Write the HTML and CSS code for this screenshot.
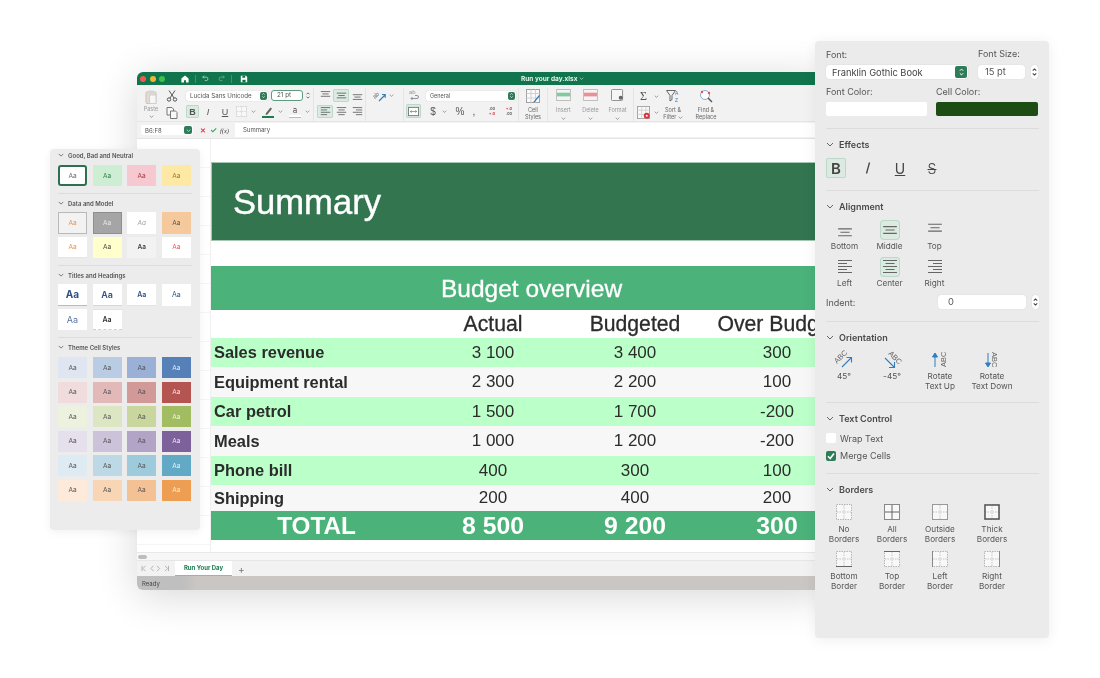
FILE: index.html
```html
<!DOCTYPE html>
<html lang="en">
  <head>
    <meta charset="UTF-8" />
    <meta name="viewport" content="width=device-width, initial-scale=1.0" />
    <title>Run your day.xlsx</title>
    <link rel="stylesheet" href="styles.css">
  </head>
  <body>
    <svg class="defs" aria-hidden="true">
      <symbol id="chev" viewBox="0 0 8 5"><path d="M1 1l3 3 3-3" fill="none" stroke="currentColor" stroke-width="1"/></symbol>
      <symbol id="up-down" viewBox="0 0 8 12"><path d="M2 4.500l2-2 2 2M2 7.500l2 2 2-2" fill="none" stroke="currentColor" stroke-width="1.200"/></symbol>
      <symbol id="a-top" viewBox="0 0 14 14"><path d="M1 2h12M3 5h8M1 8h12" stroke="currentColor" fill="none"/></symbol>
      <symbol id="a-mid" viewBox="0 0 14 14"><path d="M1 4h12M3 7h8M1 10h12" stroke="currentColor" fill="none"/></symbol>
      <symbol id="a-bot" viewBox="0 0 14 14"><path d="M1 6h12M3 9h8M1 12h12" stroke="currentColor" fill="none"/></symbol>
      <symbol id="a-left" viewBox="0 0 14 14"><path d="M1 2h12M1 5h8M1 8h12M1 11h8" stroke="currentColor" fill="none"/></symbol>
      <symbol id="a-center" viewBox="0 0 14 14"><path d="M1 2h12M3 5h8M1 8h12M3 11h8" stroke="currentColor" fill="none"/></symbol>
      <symbol id="a-right" viewBox="0 0 14 14"><path d="M1 2h12M5 5h8M1 8h12M5 11h8" stroke="currentColor" fill="none"/></symbol>
      <symbol id="a-left5" viewBox="0 0 16 16"><path d="M1 1.500h14M1 4.500h9M1 7.500h14M1 10.500h9M1 13.500h14" stroke="currentColor" fill="none"/></symbol>
      <symbol id="a-center5" viewBox="0 0 16 16"><path d="M1 1.500h14M3.500 4.500h9M1 7.500h14M3.500 10.500h9M1 13.500h14" stroke="currentColor" fill="none"/></symbol>
      <symbol id="a-right5" viewBox="0 0 16 16"><path d="M1 1.500h14M6 4.500h9M1 7.500h14M6 10.500h9M1 13.500h14" stroke="currentColor" fill="none"/></symbol>
      <symbol id="grid-dash" viewBox="0 0 16 16"><rect x=".5" y=".5" width="15" height="15" fill="#f8f8f8" stroke="#b5b5b5" stroke-dasharray="1.500 1"/><path d="M8 1v14M1 8h14" stroke="#c6c6c6" stroke-dasharray="1.500 1"/></symbol>
      <symbol id="sheet-ic" viewBox="0 0 14 14"><rect x=".5" y=".5" width="13" height="13" fill="#fafafa" stroke="#a0a0a0"/><path d="M.5 4.500h13M.5 9h13M5 .5v13M9.500 .5v13" stroke="#d0d0d0" fill="none"/></symbol>
    </svg>

    <div class="stage">
      <!-- main window -->
      <section class="window">
        <header class="titlebar">
          <span class="lights"><i class="red"></i><i class="yellow"></i><i class="green"></i></span>
          <svg class="tb-home" viewBox="0 0 10 10"><path d="M5 .5L.5 4.500V9.500h3.200V6.500h2.600v3h3.200V4.500z" fill="#fff"/></svg>
          <span class="tb-sep"></span>
          <svg class="tb-undo" viewBox="0 0 10 10"><path d="M3 1L1 3l2 2M1 3h5a2.500 2.500 0 010 5H4" fill="none" stroke="#cfe3d9"/></svg>
          <svg class="tb-redo" viewBox="0 0 10 10"><path d="M7 1l2 2-2 2M9 3H4a2.500 2.500 0 000 5h2" fill="none" stroke="#7fb49b"/></svg>
          <span class="tb-sep"></span>
          <svg class="tb-save" viewBox="0 0 10 10"><path d="M1 1h6.500L9 2.500V9H1z" fill="#fff"/><rect x="3" y="1" width="3.500" height="2.500" fill="#10754c"/><rect x="3" y="6" width="4" height="3" fill="#10754c"/></svg>
          <span class="doc-name">Run your day.xlsx <svg viewBox="0 0 8 5"><use href="#chev"/></svg></span>
        </header>

        <div class="ribbon">
          <div class="rb-group g-font">
            <div class="paste">
              <svg class="ic12" viewBox="0 0 12 14"><rect x="1" y="2" width="10" height="11.500" rx="1" fill="#e2dcd2" stroke="#c9c3b8"/><rect x="3.500" y=".5" width="5" height="3" fill="#d6d6d6"/><rect x="4.500" y="5" width="6.500" height="8.500" fill="#f6f6f6" stroke="#cfcfcf"/></svg>
              <span class="rb-label dim">Paste</span>
              <svg class="chev dim" viewBox="0 0 8 5"><use href="#chev"/></svg>
            </div>
            <div class="cut-copy">
              <svg class="ic12" viewBox="0 0 12 12"><path d="M3 .5l5 7.500M9 .5L4 8" stroke="#555" fill="none"/><circle cx="3" cy="9.500" r="1.700" fill="none" stroke="#555"/><circle cx="9" cy="9.500" r="1.700" fill="none" stroke="#555"/></svg>
              <svg class="ic12" viewBox="0 0 12 12"><path d="M1 .5h5l1.500 1.500V8H1z" fill="#f8f8f8" stroke="#777"/><path d="M4.500 4h5L11 5.500v6H4.500z" fill="#f8f8f8" stroke="#777"/></svg>
            </div>
            <div class="rb-rows">
              <div class="rb-row">
                <div class="select sel-font"><span>Lucida Sans Unicode</span><b class="stepper"><svg viewBox="0 0 8 12"><use href="#up-down"/></svg></b></div>
                <div class="size-box">21 pt</div>
                <svg class="mini-step" viewBox="0 0 8 12"><use href="#up-down"/></svg>
              </div>
              <div class="rb-row">
                <span class="cell w13 on fmt-b">B</span>
                <span class="cell w18 fmt-i">I</span>
                <span class="cell w16 fmt-u">U</span>
                <span class="cell w16"><svg class="ic11" viewBox="0 0 16 16"><use href="#grid-dash"/></svg></span>
                <span class="cell w8"><svg class="chev" viewBox="0 0 8 5"><use href="#chev"/></svg></span>
                <span class="cell w16 ml3"><svg class="ic12" viewBox="0 0 12 12"><path d="M4 7l4.500-5.500 1.500 1.200L5.500 8.500 3.500 9z" fill="#666"/><rect y="10" width="12" height="2" fill="#1f7a4d"/></svg></span>
                <span class="cell w8"><svg class="chev" viewBox="0 0 8 5"><use href="#chev"/></svg></span>
                <span class="cell w16 ml3"><span class="color-a">a</span></span>
                <span class="cell w8"><svg class="chev" viewBox="0 0 8 5"><use href="#chev"/></svg></span>
              </div>
            </div>
          </div>

          <div class="rb-group g-align">
            <span class="cell"><svg class="ic11" viewBox="0 0 14 14"><use href="#a-top"/></svg></span>
            <span class="cell on"><svg class="ic11" viewBox="0 0 14 14"><use href="#a-mid"/></svg></span>
            <span class="cell"><svg class="ic11" viewBox="0 0 14 14"><use href="#a-bot"/></svg></span>
            <span class="cell on"><svg class="ic11" viewBox="0 0 14 14"><use href="#a-left"/></svg></span>
            <span class="cell"><svg class="ic11" viewBox="0 0 14 14"><use href="#a-center"/></svg></span>
            <span class="cell"><svg class="ic11" viewBox="0 0 14 14"><use href="#a-right"/></svg></span>
          </div>

          <div class="rb-group g-orient">
            <svg class="ic12 open" viewBox="0 0 12 12"><text class="svg-abc" transform="translate(1 9) rotate(-45)">ab</text><path d="M5 11l6-6M8 4.500h3.200v3.200" stroke="#2f7fc1" fill="none" stroke-width="1.200"/></svg>
            <svg class="chev" viewBox="0 0 8 5"><use href="#chev"/></svg>
          </div>

          <div class="rb-group g-number">
            <div class="wrap-col">
              <svg class="ic12" viewBox="0 0 12 12"><text class="svg-ab" x="1" y="5">ab</text><path d="M3 9.500h6a1.500 1.500 0 000-3H7M4.500 8L3 9.500 4.500 11" stroke="#778" fill="none" stroke-width=".8"/></svg>
              <span class="cell on merge-btn"><svg class="ic11" viewBox="0 0 12 12"><rect x=".5" y="1.500" width="11" height="9" fill="#fff" stroke="#777"/><path d="M2.500 6h7M2.500 6l1.500-1.200M2.500 6l1.500 1.200M9.500 6L8 4.800M9.500 6L8 7.200" stroke="#35a36b" fill="none" stroke-width=".8"/></svg></span>
            </div>
            <div class="rb-rows">
              <div class="rb-row"><div class="select sel-num"><span>General</span><b class="stepper"><svg viewBox="0 0 8 12"><use href="#up-down"/></svg></b></div></div>
              <div class="rb-row">
                <span class="cell w14 sym">$</span>
                <span class="cell w8"><svg class="chev" viewBox="0 0 8 5"><use href="#chev"/></svg></span>
                <span class="cell w24 sym">%</span>
                <span class="cell w4 sym">,</span>
                <span class="cell w16 ml8 dec"><span>.00</span><span class="red-t">+.0</span></span>
                <span class="cell w16 ml1 dec"><span class="red-t">+.0</span><span>.00</span></span>
              </div>
            </div>
          </div>

          <div class="rb-group g-styles rb-col">
            <svg class="ic14" viewBox="0 0 14 14"><use href="#sheet-ic"/><path d="M13 6L8 12l-1 1.500 1.800-.6L14 7z" fill="#2f7fc1"/></svg>
            <span class="rb-label">Cell<br>Styles</span>
          </div>

          <div class="rb-group g-cells">
            <div class="rb-col">
              <svg class="ic-wide" viewBox="0 0 16 13"><rect x=".5" y=".5" width="15" height="12" fill="#f4f4f4" stroke="#bbb"/><rect x="1" y="4" width="14" height="4" fill="#7fcb9e"/></svg>
              <span class="rb-label dim">Insert</span>
              <svg class="chev" viewBox="0 0 8 5"><use href="#chev"/></svg>
            </div>
            <div class="rb-col">
              <svg class="ic-wide" viewBox="0 0 16 13"><rect x=".5" y=".5" width="15" height="12" fill="#f4f4f4" stroke="#bbb"/><rect x="1" y="4" width="14" height="4" fill="#ea8f96"/></svg>
              <span class="rb-label dim">Delete</span>
              <svg class="chev" viewBox="0 0 8 5"><use href="#chev"/></svg>
            </div>
            <div class="rb-col">
              <svg class="ic-wide" viewBox="0 0 14 13"><rect x=".5" y=".5" width="12" height="12" rx="1" fill="#f6f6f6" stroke="#888"/><circle cx="10.500" cy="9.500" r="2.200" fill="#666"/></svg>
              <span class="rb-label dim">Format</span>
              <svg class="chev" viewBox="0 0 8 5"><use href="#chev"/></svg>
            </div>
          </div>

          <div class="rb-group g-edit">
            <div class="edit-col">
              <span class="edit-row"><span class="sigma">Σ</span><svg class="chev" viewBox="0 0 8 5"><use href="#chev"/></svg></span>
              <span class="edit-row"><svg class="ic13" viewBox="0 0 14 14"><use href="#sheet-ic"/><circle cx="10.500" cy="10.500" r="3.200" fill="#d8343f"/><circle cx="10.500" cy="10.500" r="1.100" fill="#fff"/></svg><svg class="chev" viewBox="0 0 8 5"><use href="#chev"/></svg></span>
            </div>
            <div class="rb-col col-sort">
              <svg class="ic14" viewBox="0 0 14 14"><path d="M.5 1.500h9l-3.500 5v4l-2 1.500V6.500z" fill="#f4f4f4" stroke="#666"/><text class="svg-az" x="9" y="6">A</text><text class="svg-az" x="9" y="13">Z</text></svg>
              <span class="rb-label">Sort &amp;<br>Filter <svg class="chev" viewBox="0 0 8 5"><use href="#chev"/></svg></span>
            </div>
            <div class="rb-col col-find">
              <svg class="ic14" viewBox="0 0 14 14"><circle cx="6" cy="6" r="4.500" fill="#fff" stroke="#7fb0d8"/><path d="M9 9l4 4" stroke="#555" stroke-width="1.500"/><circle cx="3" cy="3" r="1.200" fill="#e0525c"/><circle cx="10" cy="4" r="1.200" fill="#e0525c"/></svg>
              <span class="rb-label">Find &amp;<br>Replace</span>
            </div>
          </div>
        </div>

        <div class="formula-bar">
          <div class="name-box"><span>B6:F8</span><b class="stepper"><svg viewBox="0 0 8 5"><use href="#chev"/></svg></b></div>
          <span class="fx-x">✕</span>
          <span class="fx-ok">✓</span>
          <span class="fx-f">f(x)</span>
          <div class="fx-input">Summary</div>
        </div>

        <div class="sheet">
          <div class="gutter"></div>
          <div class="cells">
            <div class="title-cell">Summary</div>
            <div class="band">Budget overview</div>
            <div class="row head"><span></span><span>Actual</span><span>Budgeted</span><span>Over Budget</span></div>
            <div class="row green r29"><b>Sales revenue</b><span>3 100</span><span>3 400</span><span>300</span></div>
            <div class="row plain r30"><b>Equipment rental</b><span>2 300</span><span>2 200</span><span>100</span></div>
            <div class="row green r29"><b>Car petrol</b><span>1 500</span><span>1 700</span><span>-200</span></div>
            <div class="row plain r30"><b>Meals</b><span>1 000</span><span>1 200</span><span>-200</span></div>
            <div class="row green r29"><b>Phone bill</b><span>400</span><span>300</span><span>100</span></div>
            <div class="row plain r26"><b>Shipping</b><span>200</span><span>400</span><span>200</span></div>
            <div class="row total"><b>TOTAL</b><b>8 500</b><b>9 200</b><b>300</b></div>
          </div>
        </div>

        <div class="scroll-strip"><span class="thumb"></span></div>
        <div class="tabs">
          <span class="tab-nav">
            <svg viewBox="0 0 6 8"><path d="M1 1v6M5 1L2 4l3 3" fill="none" stroke="#aaa"/></svg>
            <svg viewBox="0 0 6 8"><path d="M5 1L2 4l3 3" fill="none" stroke="#aaa"/></svg>
            <svg viewBox="0 0 6 8"><path d="M1 1l3 3-3 3" fill="none" stroke="#aaa"/></svg>
            <svg viewBox="0 0 6 8"><path d="M5 1v6M1 1l3 3-3 3" fill="none" stroke="#aaa"/></svg>
          </span>
          <span class="tab">Run Your Day</span>
          <span class="tab-add">+</span>
        </div>
        <footer class="status"><span>Ready</span></footer>
      </section>

      <!-- cell styles palette -->
      <aside class="styles-panel">
        <section class="st-section">
          <h4><svg viewBox="0 0 8 5"><use href="#chev"/></svg>Good, Bad and Neutral</h4>
          <div class="st-grid">
            <span class="sw sel">Aa</span><span class="sw good">Aa</span><span class="sw bad">Aa</span><span class="sw neutral">Aa</span>
          </div>
        </section>
        <section class="st-section">
          <h4><svg viewBox="0 0 8 5"><use href="#chev"/></svg>Data and Model</h4>
          <div class="st-grid tall">
            <span class="sw calc">Aa</span><span class="sw check">Aa</span><span class="sw expl">Aa</span><span class="sw input">Aa</span>
            <span class="sw linked">Aa</span><span class="sw note">Aa</span><span class="sw output">Aa</span><span class="sw warn">Aa</span>
          </div>
        </section>
        <section class="st-section">
          <h4><svg viewBox="0 0 8 5"><use href="#chev"/></svg>Titles and Headings</h4>
          <div class="st-grid tall">
            <span class="sw h1">Aa</span><span class="sw h2">Aa</span><span class="sw h3">Aa</span><span class="sw h4x">Aa</span>
            <span class="sw ttl">Aa</span><span class="sw tot">Aa</span>
          </div>
        </section>
        <section class="st-section last">
          <h4><svg viewBox="0 0 8 5"><use href="#chev"/></svg>Theme Cell Styles</h4>
          <div class="st-grid theme">
            <span class="sw b1">Aa</span><span class="sw b2">Aa</span><span class="sw b3">Aa</span><span class="sw b4">Aa</span>
            <span class="sw r1">Aa</span><span class="sw r2">Aa</span><span class="sw r3">Aa</span><span class="sw r4">Aa</span>
            <span class="sw g1">Aa</span><span class="sw g2">Aa</span><span class="sw g3">Aa</span><span class="sw g4">Aa</span>
            <span class="sw p1">Aa</span><span class="sw p2">Aa</span><span class="sw p3">Aa</span><span class="sw p4">Aa</span>
            <span class="sw c1">Aa</span><span class="sw c2">Aa</span><span class="sw c3">Aa</span><span class="sw c4">Aa</span>
            <span class="sw o1">Aa</span><span class="sw o2">Aa</span><span class="sw o3">Aa</span><span class="sw o4">Aa</span>
          </div>
        </section>
      </aside>

      <!-- format inspector -->
      <aside class="format-panel">
        <section class="fp-section fp-top">
          <div class="fp-fields">
            <div class="fp-field">
              <label>Font:</label>
              <div class="select sel-panel"><span>Franklin Gothic Book</span><b class="stepper"><svg viewBox="0 0 8 12"><use href="#up-down"/></svg></b></div>
            </div>
            <div class="fp-field f-size">
              <label>Font Size:</label>
              <div class="fp-step"><div class="fp-input w47">15 pt</div><span class="step-pill"><svg viewBox="0 0 8 12"><use href="#up-down"/></svg></span></div>
            </div>
          </div>
          <div class="fp-colors">
            <div class="fp-field"><label>Font Color:</label><div class="color-well"></div></div>
            <div class="fp-field"><label>Cell Color:</label><div class="color-well dark"></div></div>
          </div>
        </section>

        <section class="fp-section">
          <h3><svg viewBox="0 0 8 5"><use href="#chev"/></svg>Effects</h3>
          <div class="effects">
            <span class="fx-btn on f-b">B</span>
            <span class="fx-btn f-i"><svg viewBox="0 0 12 14"><path d="M7.500 1.500L4.500 12.500" stroke="#444" stroke-width="1.300" fill="none"/></svg></span>
            <span class="fx-btn f-u">U</span>
            <span class="fx-btn f-s">S</span>
          </div>
        </section>

        <section class="fp-section">
          <h3><svg viewBox="0 0 8 5"><use href="#chev"/></svg>Alignment</h3>
          <div class="align-grid">
            <div class="tool"><span class="tool-ic"><svg viewBox="0 0 14 14"><use href="#a-bot"/></svg></span>Bottom</div>
            <div class="tool"><span class="tool-ic on"><svg viewBox="0 0 14 14"><use href="#a-mid"/></svg></span>Middle</div>
            <div class="tool"><span class="tool-ic"><svg viewBox="0 0 14 14"><use href="#a-top"/></svg></span>Top</div>
            <div class="tool"><span class="tool-ic"><svg viewBox="0 0 16 16"><use href="#a-left5"/></svg></span>Left</div>
            <div class="tool"><span class="tool-ic on"><svg viewBox="0 0 16 16"><use href="#a-center5"/></svg></span>Center</div>
            <div class="tool"><span class="tool-ic"><svg viewBox="0 0 16 16"><use href="#a-right5"/></svg></span>Right</div>
          </div>
          <div class="indent">
            <label>Indent:</label>
            <div class="fp-step"><div class="fp-input w88">0</div><span class="step-pill"><svg viewBox="0 0 8 12"><use href="#up-down"/></svg></span></div>
          </div>
        </section>

        <section class="fp-section">
          <h3><svg viewBox="0 0 8 5"><use href="#chev"/></svg>Orientation</h3>
          <div class="four-grid orient">
            <div class="tool">
              <svg class="orient-ic" viewBox="0 0 22 20"><text class="svg-rot" transform="translate(4 15) rotate(-45)">ABC</text><path d="M9 18l9-9M13.500 8.500H18.500V13.500" fill="none" stroke="#2f7fc1" stroke-width="1.100"/></svg>
              45°
            </div>
            <div class="tool">
              <svg class="orient-ic" viewBox="0 0 22 20"><text class="svg-rot" transform="translate(7 5) rotate(45)">ABC</text><path d="M4 9l9 9M8 18.500h5.500V13" fill="none" stroke="#2f7fc1" stroke-width="1.100"/></svg>
              -45°
            </div>
            <div class="tool">
              <svg class="orient-ic" viewBox="0 0 22 20"><text class="svg-rot" transform="translate(17 18) rotate(-90)">ABC</text><path d="M6 18V6M3.500 8L6 4l2.500 4z" fill="#2f7fc1" stroke="#2f7fc1"/></svg>
              Rotate<br>Text Up
            </div>
            <div class="tool">
              <svg class="orient-ic" viewBox="0 0 22 20"><text class="svg-rot" transform="translate(11 3) rotate(90)">ABC</text><path d="M7 4v12M4.500 14L7 18l2.500-4z" fill="#2f7fc1" stroke="#2f7fc1"/></svg>
              Rotate<br>Text Down
            </div>
          </div>
        </section>

        <section class="fp-section">
          <h3><svg viewBox="0 0 8 5"><use href="#chev"/></svg>Text Control</h3>
          <div class="checks">
            <div class="check-row"><span class="box"></span>Wrap Text</div>
            <div class="check-row"><span class="box ticked"><svg viewBox="0 0 10 10"><path d="M2 5.200l2.200 2.300L8 2.500" fill="none" stroke="#fff" stroke-width="1.600"/></svg></span>Merge Cells</div>
          </div>
        </section>

        <section class="fp-section last">
          <h3><svg viewBox="0 0 8 5"><use href="#chev"/></svg>Borders</h3>
          <div class="four-grid borders">
            <div class="tool"><svg class="b-ic" viewBox="0 0 16 16"><use href="#grid-dash"/></svg>No<br>Borders</div>
            <div class="tool"><svg class="b-ic" viewBox="0 0 16 16"><rect x=".5" y=".5" width="15" height="15" fill="#f8f8f8" stroke="#888"/><path d="M8 1v14M1 8h14" stroke="#666"/></svg>All<br>Borders</div>
            <div class="tool"><svg class="b-ic" viewBox="0 0 16 16"><use href="#grid-dash"/><rect x=".5" y=".5" width="15" height="15" fill="none" stroke="#999"/></svg>Outside<br>Borders</div>
            <div class="tool"><svg class="b-ic" viewBox="0 0 16 16"><use href="#grid-dash"/><rect x="1" y="1" width="14" height="14" fill="none" stroke="#555" stroke-width="1.500"/></svg>Thick<br>Borders</div>
            <div class="tool"><svg class="b-ic" viewBox="0 0 16 16"><use href="#grid-dash"/><path d="M0 15.500h16" stroke="#666"/></svg>Bottom<br>Border</div>
            <div class="tool"><svg class="b-ic" viewBox="0 0 16 16"><use href="#grid-dash"/><path d="M0 .5h16" stroke="#666"/></svg>Top<br>Border</div>
            <div class="tool"><svg class="b-ic" viewBox="0 0 16 16"><use href="#grid-dash"/><path d="M.5 0v16" stroke="#888"/></svg>Left<br>Border</div>
            <div class="tool"><svg class="b-ic" viewBox="0 0 16 16"><use href="#grid-dash"/><path d="M15.500 0v16" stroke="#888"/></svg>Right<br>Border</div>
          </div>
        </section>
      </aside>
    </div>
  </body>
</html>
```

FILE: styles.css
```css
* {
  box-sizing: border-box;
}

html,
body {
  margin: 0;
  height: 100%;
  background: #fff;
  overflow: hidden;
}

.defs {
  position: absolute;
  width: 0;
  height: 0;
}

.stage {
  position: relative;
  width: 1100px;
  height: 678px;
  font-family: "Inter", "Liberation Sans", sans-serif;
  color: #444;
}

/* main window */
.window {
  position: absolute;
  left: 137px;
  top: 72px;
  width: 690px;
  height: 518px;
  display: flex;
  flex-direction: column;
  background: #fff;
  border-radius: 6px;
  overflow: hidden;
  box-shadow: 0 6px 40px rgba(0, 0, 0, 0.16);
  filter: blur(0.3px);
}

.titlebar {
  position: relative;
  flex: none;
  height: 13px;
  display: flex;
  align-items: center;
  background: #10754c;
}

.lights {
  display: flex;
  gap: 3.500px;
  padding-left: 3px;
}

.lights i {
  width: 6px;
  height: 6px;
  border-radius: 50%;
}

.lights .red { background: #ee5a52; }
.lights .yellow { background: #f0b43a; }
.lights .green { background: #3fc04d; }

.tb-home { width: 8px; height: 8px; margin-left: 16px; }
.tb-sep { width: 1px; height: 8px; margin: 0 6px; background: #3f9170; }
.tb-undo { width: 7px; height: 7px; }
.tb-redo { width: 7px; height: 7px; margin-left: 9px; }
.tb-save { width: 8px; height: 8px; margin-left: 2px; }

.doc-name {
  position: absolute;
  left: 384px;
  font-size: 6.500px;
  font-weight: 700;
  color: #e6f2ec;
  white-space: nowrap;
}

.doc-name svg {
  width: 5px;
  height: 3px;
  vertical-align: 1px;
}

/* ribbon */
.ribbon {
  flex: none;
  height: 37px;
  display: flex;
  background: #f2f2f2;
  border-bottom: 1px solid #e6e6e6;
  font-size: 6px;
  color: #555;
}

.rb-group {
  flex: none;
  display: flex;
  height: 33px;
  margin-top: 3px;
  border-right: 1px solid #e4e4e4;
}

.rb-rows {
  display: flex;
  flex-direction: column;
  gap: 3px;
  padding-top: 1px;
}

.rb-row {
  display: flex;
  align-items: center;
  height: 13px;
}

.rb-col {
  display: flex;
  flex-direction: column;
  align-items: center;
  justify-content: flex-start;
  gap: 4px;
  padding-top: 1px;
}

.rb-label {
  font-size: 5.500px;
  line-height: 7px;
  text-align: center;
  color: #666;
}

.dim { color: #999; }

.cell {
  display: flex;
  align-items: center;
  justify-content: center;
  height: 13px;
  flex: none;
}

.cell.on,
.tool-ic.on,
.fx-btn.on {
  background: #dcebe2;
  box-shadow: inset 0 0 0 1px #bcd8c8;
  border-radius: 2px;
}

.w4 { width: 4px; }
.w8 { width: 8px; }
.w13 { width: 13px; }
.w14 { width: 14px; }
.w16 { width: 16px; }
.w18 { width: 18px; }
.w24 { width: 24px; }
.ml1 { margin-left: 1px; }
.ml3 { margin-left: 3px; }
.ml8 { margin-left: 8px; }

.ic11 { width: 11px; height: 11px; }
.ic12 { width: 12px; height: 12px; }
.ic13 { width: 13px; height: 13px; }
.ic14 { width: 14px; height: 14px; }
.ic-wide { width: 15px; height: 12px; }
.open { overflow: visible; }

.chev {
  width: 5px;
  height: 3px;
  color: #666;
  flex: none;
}

.g-font { width: 177px; padding-left: 7px; }

.paste {
  width: 14px;
  display: flex;
  flex-direction: column;
  align-items: center;
  gap: 2px;
  padding-top: 2px;
}

.paste .ic12 { height: 14px; }

.cut-copy {
  width: 14px;
  margin-left: 7px;
  margin-right: 7px;
  display: flex;
  flex-direction: column;
  align-items: center;
  gap: 5px;
  padding-top: 2px;
}

.select {
  display: flex;
  align-items: center;
  justify-content: space-between;
  background: #fff;
  border-radius: 2px;
  box-shadow: 0 0 1px rgba(0, 0, 0, 0.25);
}

.sel-font {
  width: 82px;
  height: 10px;
  padding-left: 4px;
  font-size: 6.200px;
  color: #555;
}

.stepper {
  display: flex;
  align-items: center;
  justify-content: center;
  width: 7px;
  height: 8px;
  margin-right: 1px;
  background: #2f7d58;
  border-radius: 2px;
  color: #fff;
}

.stepper svg { width: 5px; height: 7px; }

.size-box {
  width: 32px;
  height: 11px;
  margin-left: 3px;
  padding-left: 5px;
  font-size: 6.300px;
  line-height: 9px;
  background: #fff;
  border: 1px solid #5d9c7e;
  border-radius: 3px;
}

.mini-step {
  width: 6px;
  height: 9px;
  margin-left: 2px;
  color: #666;
}

.fmt-b { font: 700 9px "Liberation Sans", sans-serif; }
.fmt-i { font: italic 9px "Liberation Sans", sans-serif; }
.fmt-u { font: 9px "Liberation Sans", sans-serif; text-decoration: underline; }

.color-a {
  display: block;
  width: 12px;
  padding-bottom: 1px;
  border-bottom: 2px solid #fff;
  box-shadow: 0 1px 0 #bbb;
  font-size: 8px;
  line-height: 8px;
  text-align: center;
}

.g-align {
  width: 52px;
  padding-left: 3px;
  display: grid;
  grid-template-columns: repeat(3, 16px);
  grid-auto-rows: 13px;
  row-gap: 3px;
  padding-top: 1px;
}

.g-orient {
  width: 38px;
  padding: 2px 0 0 8px;
  align-items: flex-start;
  gap: 3px;
}

.g-orient .chev { margin-top: 4px; }

.svg-abc { font: 6px "Liberation Sans", sans-serif; fill: #666; }
.svg-ab { font: 6px "Liberation Sans", sans-serif; fill: #999; }
.svg-az { font: 5px "Liberation Sans", sans-serif; fill: #2f7fc1; }

.g-number { width: 115px; padding-left: 2px; }

.wrap-col {
  width: 15px;
  margin-right: 5px;
  display: flex;
  flex-direction: column;
  align-items: center;
  gap: 3px;
  padding-top: 1px;
}

.merge-btn { width: 15px; height: 14px; }

.sel-num {
  width: 90px;
  height: 10px;
  padding-left: 4px;
  font-size: 5.500px;
}

.sym {
  font: 10px "Liberation Sans", sans-serif;
  color: #555;
}

.dec {
  flex-direction: column;
  font-size: 4px;
  line-height: 4.500px;
  font-weight: 600;
  color: #666;
}

.red-t { color: #d8343f; }

.g-styles { width: 29px; }

.g-cells {
  width: 86px;
  padding-left: 2px;
  display: grid;
  grid-template-columns: repeat(3, 27px);
}

.g-cells .rb-col { gap: 3px; }
.g-cells .rb-label { margin-top: 3px; }

.g-edit {
  width: 200px;
  border-right: 0;
}

.edit-col {
  width: 30px;
  display: flex;
  flex-direction: column;
  gap: 2px;
  padding: 1px 0 0 3px;
}

.edit-row {
  display: flex;
  align-items: center;
  gap: 4px;
  height: 14px;
}

.sigma {
  width: 13px;
  font: 12px "Liberation Serif", serif;
  text-align: center;
  color: #555;
}

.col-sort { width: 30px; margin-left: -6px; margin-right: 2px; }
.col-find { width: 32px; }

/* formula bar */
.formula-bar {
  flex: none;
  height: 17px;
  display: flex;
  align-items: center;
  background: #f2f2f2;
  border-bottom: 1px solid #e4e4e4;
  font-size: 6px;
}

.name-box {
  width: 52px;
  height: 10px;
  margin-left: 4px;
  padding-left: 4px;
  display: flex;
  align-items: center;
  justify-content: space-between;
  background: #fff;
  border-radius: 2px;
  color: #555;
}

.name-box .stepper { width: 8px; }
.name-box .stepper svg { width: 5px; height: 3px; }

.fx-x { width: 8px; margin-left: 7px; color: #e0404a; font-size: 7px; font-weight: 700; }
.fx-ok { width: 8px; margin-left: 2px; color: #3aa655; font-size: 8px; font-weight: 700; }
.fx-f { width: 14px; margin-left: 2px; font: italic 6.500px "Liberation Serif", serif; color: #444; }

.fx-input {
  flex: 1;
  height: 14px;
  margin-left: 1px;
  padding-left: 8px;
  line-height: 14px;
  background: #fff;
  color: #555;
}

/* sheet */
.sheet {
  flex: none;
  height: 414px;
  display: flex;
  overflow: hidden;
  border-bottom: 1px solid #e8e8e8;
}

.gutter {
  flex: none;
  width: 74px;
  border-right: 1px solid #efefef;
  background: repeating-linear-gradient(to bottom, transparent 0 28px, #f5f5f5 28px 29px);
}

.cells {
  flex: none;
  width: 637px;
  padding-top: 23px;
  font-family: "Liberation Sans", Arial, sans-serif;
  color: #2c2c2c;
}

.title-cell {
  height: 79px;
  padding-left: 21px;
  font-size: 34.600px;
  line-height: 79px;
  color: #fff;
  background: #32754f;
  border: 1px solid #a4c8b1;
  border-right: 0;
  -webkit-text-stroke: 0.4px #fff;
}

.band {
  height: 44px;
  margin-top: 25px;
  padding-left: 230px;
  font-size: 24.500px;
  line-height: 45px;
  color: #fff;
  background: #4bb27a;
  -webkit-text-stroke: 0.3px #fff;
}

.row {
  display: grid;
  grid-template-columns: 211px 142px 142px 142px;
  align-items: center;
  font-size: 17px;
  text-align: center;
  white-space: nowrap;
}

.row b:first-child {
  padding-left: 3px;
  font-size: 16.400px;
  text-align: left;
}

.head {
  height: 28px;
  font-size: 21.200px;
  background: #fff;
  -webkit-text-stroke: 0.3px #2c2c2c;
}

.r26 { height: 26px; }
.r29 { height: 29px; }
.r30 { height: 30px; }
.green { background: #bbffc9; }
.plain { background: #f7f7f7; }

.total {
  height: 29px;
  font-size: 24.800px;
  color: #fff;
  background: #4bb27a;
}

.row.total b:first-child {
  padding: 0;
  font-size: 24.300px;
  text-align: center;
}

.scroll-strip {
  flex: none;
  height: 8px;
  padding-left: 1px;
  display: flex;
  align-items: center;
  background: #f7f7f7;
  border-bottom: 1px solid #e6e6e6;
}

.thumb {
  width: 9px;
  height: 4px;
  border-radius: 2px;
  background: #bdbdbd;
}

.tabs {
  flex: none;
  height: 15px;
  display: flex;
  align-items: center;
  background: #f2f2f2;
}

.tab-nav {
  display: flex;
  gap: 2px;
  width: 38px;
  padding-left: 4px;
}

.tab-nav svg { width: 5.500px; height: 7px; }

.tab {
  width: 57px;
  height: 15px;
  font-size: 6px;
  font-weight: 700;
  line-height: 13px;
  text-align: center;
  color: #1c7a4f;
  background: #fff;
  border-bottom: 1px solid #aaa;
}

.tab-add {
  margin-left: 6px;
  font-size: 10px;
  line-height: 10px;
  color: #777;
}

.status {
  flex: 1;
  display: flex;
  align-items: center;
  background: linear-gradient(to right, #bfbfbf 45px, #cac6c4 60px);
  font-size: 6px;
  color: #444;
  padding-left: 5px;
}

/* cell styles palette */
.styles-panel {
  position: absolute;
  left: 50px;
  top: 149px;
  width: 150px;
  height: 381px;
  padding: 0 8px;
  background: #ececec;
  border-radius: 4px;
  box-shadow: 0 2px 10px rgba(0, 0, 0, 0.06);
  filter: blur(0.3px);
}

.st-section {
  padding: 3px 0 7px;
  border-bottom: 1px solid #dcdcdc;
}

.st-section:first-child { padding-top: 0; }
.st-section.last { border-bottom: 0; }

.st-section h4 {
  display: flex;
  align-items: center;
  gap: 4px;
  height: 12px;
  margin: 0 0 3px;
  font-size: 6px;
  font-weight: 600;
  color: #555;
}

.st-section h4 svg {
  width: 6px;
  height: 4px;
  color: #555;
}

.st-section:first-child h4,
.st-section.last h4 { margin-bottom: 4px; }

.st-grid {
  display: grid;
  grid-template-columns: repeat(4, 29px);
  grid-auto-rows: 21px;
  column-gap: 5.600px;
  row-gap: 3px;
}

.st-grid.tall { grid-auto-rows: 21.500px; }
.st-grid.theme { row-gap: 3.600px; }

.sw {
  display: flex;
  align-items: center;
  justify-content: center;
  background: #fff;
  font-size: 6.500px;
  color: #555;
}

.sel { border: 2px solid #2f6f4f; border-radius: 3px; color: #666; }
.good { background: #cdeed3; color: #2f7d4f; }
.bad { background: #f6c8cf; color: #a33a42; }
.neutral { background: #fde9a4; color: #a5732b; }

.calc { background: #f2f2f2; border: 1px solid #b9b9b9; color: #e8914a; }
.check { background: #a5a5a5; border: 1px solid #8e8e8e; color: #e8e8e8; }
.expl { color: #a0a0a0; font-style: italic; }
.input { background: #f6c99c; color: #555; }
.linked { color: #e8914a; border-bottom: 1px solid #fae0c8; }
.note { background: #ffffcc; color: #444; }
.output { background: #f2f2f2; color: #444; font-weight: 600; }
.warn { color: #e8545f; }

.h1 { font-size: 10px; font-weight: 700; color: #2f5288; border-bottom: 1px solid #a8bde0; }
.h2 { font-size: 9px; font-weight: 600; color: #2f5288; border-bottom: 1px solid #ccd8ea; }
.h3 { font-size: 7px; font-weight: 600; color: #2f5288; border-bottom: 1px solid #dce4f0; }
.h4x { font-size: 7px; color: #2f5288; }
.ttl { font-size: 9px; color: #5a76a3; }
.tot { font-size: 7px; font-weight: 600; color: #333; border-top: 1px solid #dce4f0; border-bottom: 1px dashed #c4d1e6; }

.b1 { background: #dfe6f1; }
.b2 { background: #bacce4; }
.b3 { background: #9ab0d6; }
.b4 { background: #5680b8; color: #e8eef7; }
.r1 { background: #f0dcdc; }
.r2 { background: #e2b9b8; }
.r3 { background: #d19997; }
.r4 { background: #b45552; color: #f5e4e4; }
.g1 { background: #edf2df; }
.g2 { background: #dde6c3; }
.g3 { background: #c9d69d; }
.g4 { background: #a2bc62; color: #eff4dd; }
.p1 { background: #e5e0ec; }
.p2 { background: #ccc2da; }
.p3 { background: #b2a4c7; }
.p4 { background: #7c619b; color: #ece6f3; }
.c1 { background: #deebf2; }
.c2 { background: #bcd9e5; }
.c3 { background: #9ecbdc; }
.c4 { background: #62a9c5; color: #e6f3f8; }
.o1 { background: #fdeada; }
.o2 { background: #f8d5b4; }
.o3 { background: #f4c195; }
.o4 { background: #ee9e52; color: #fdeeda; }

/* format inspector */
.format-panel {
  position: absolute;
  left: 815px;
  top: 41px;
  width: 234px;
  height: 597px;
  padding: 0 10px 0 11px;
  background: #ebebeb;
  border-radius: 4px;
  box-shadow: 0 2px 14px rgba(0, 0, 0, 0.07);
  font-size: 8.500px;
  color: #555;
  filter: blur(0.3px);
}

.fp-section {
  padding: 8px 0 0;
  border-bottom: 1px solid #dcdcdc;
}

.fp-section.last { border-bottom: 0; }

.fp-top { height: 88px; padding-top: 8px; }

.fp-section h3 {
  display: flex;
  align-items: center;
  gap: 5px;
  height: 14px;
  margin: 0;
  font-size: 9px;
  font-weight: 600;
  color: #4a4a4a;
}

.fp-section h3 svg {
  width: 8px;
  height: 5px;
  color: #666;
}

.fp-fields { display: flex; gap: 10px; }
.fp-field { display: flex; flex-direction: column; }
.fp-field label { height: 12px; line-height: 12px; font-size: 9px; }
.f-size { margin-top: -1px; }
.f-size label { height: 13px; }

.sel-panel {
  width: 142px;
  height: 14px;
  padding-left: 6px;
  margin-top: 4px;
  border-radius: 3px;
  font-size: 9.300px;
  color: #444;
}

.sel-panel .stepper { width: 12px; height: 12px; }
.sel-panel .stepper svg { width: 7px; height: 10px; }

.fp-step { display: flex; align-items: center; gap: 5px; }
.f-size .fp-step { margin-top: 4px; }

.fp-input {
  height: 14px;
  padding-left: 7px;
  line-height: 14px;
  background: #fff;
  border-radius: 3px;
  box-shadow: 0 0 1px rgba(0, 0, 0, 0.2);
  font-size: 9.300px;
}

.w47 { width: 47px; }
.w88 { width: 88px; padding-left: 10px; }

.step-pill {
  display: flex;
  width: 7px;
  height: 14px;
  margin-left: 1px;
  background: #fff;
  border-radius: 3px;
  box-shadow: 0 0 1px rgba(0, 0, 0, 0.2);
  color: #444;
}

.step-pill svg { width: 7px; height: 14px; }

.fp-colors {
  display: flex;
  gap: 9px;
  margin-top: 7px;
}

.color-well {
  width: 101px;
  height: 14px;
  margin-top: 4px;
  background: #fff;
  border-radius: 2px;
}

.color-well.dark {
  width: 102px;
  background: #1d4d12;
}

.effects {
  display: flex;
  align-items: center;
  height: 20px;
  margin: 7px 0 12px;
}

.fx-btn {
  display: flex;
  align-items: center;
  justify-content: center;
  width: 20px;
  height: 20px;
  margin-right: 12px;
  font-family: "Inter", sans-serif;
  font-size: 14px;
  color: #444;
}

.fx-btn svg { width: 12px; height: 14px; }
.f-b { font-weight: 600; font-size: 15px; border-radius: 4px; }
.f-u { text-decoration: underline; }
.f-s { text-decoration: line-through; font-weight: 300; }

.align-grid {
  display: grid;
  grid-template-columns: repeat(3, 45px);
  grid-auto-rows: 36.500px;
  margin: 7px 0 0 -4px;
}

.tool {
  display: flex;
  flex-direction: column;
  align-items: center;
  font-size: 8.200px;
  line-height: 10px;
  text-align: center;
  color: #555;
}

.tool-ic {
  display: flex;
  align-items: center;
  justify-content: center;
  width: 20px;
  height: 20px;
  margin-bottom: 1px;
  color: #666;
}

.tool-ic.on { border-radius: 4px; }
.tool-ic svg { width: 16px; height: 16px; }

.indent {
  display: flex;
  align-items: center;
  justify-content: space-between;
  height: 14px;
  margin: 2px 0 12px;
  font-size: 9px;
}

.four-grid {
  display: grid;
  grid-template-columns: 48px 48px 48px 56px;
  margin-left: -6px;
}

.orient { margin-top: 5px; padding-bottom: 11px; }
.orient-ic { width: 22px; height: 20px; margin-bottom: 2px; overflow: visible; }
.svg-rot { font: 7.500px "Liberation Sans", sans-serif; fill: #666; }

.checks {
  display: flex;
  flex-direction: column;
  gap: 7px;
  margin: 8px 0 12px;
  font-size: 9px;
}

.check-row {
  display: flex;
  align-items: center;
  gap: 4px;
  height: 10.500px;
}

.box {
  display: flex;
  width: 10px;
  height: 10px;
  background: #fff;
  border-radius: 2px;
}

.box.ticked { background: #2f7d58; }

.borders {
  margin-top: 8px;
  grid-auto-rows: 47px;
}

.b-ic {
  width: 16px;
  height: 16px;
  margin-bottom: 4px;
}
```
